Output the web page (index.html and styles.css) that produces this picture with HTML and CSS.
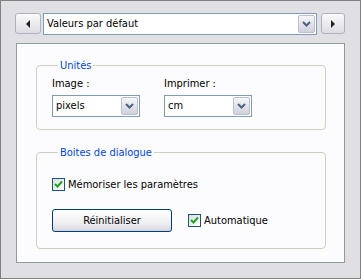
FILE: index.html
```html
<!DOCTYPE html>
<html lang="fr">
<head>
    <meta charset="UTF-8">
    <title>Préférences</title>
    <link rel="stylesheet" href="styles.css">
</head>
<body>
    <div class="window">
        <div class="nav">
            <button class="nav-btn"><span class="tri tri-left"></span></button>
            <div class="combo wide">
                <span class="combo-text">Valeurs par défaut</span>
                <span class="drop"><svg width="9" height="6" viewBox="0 0 9 6"><path d="M1 1 L4.5 4.5 L8 1" fill="none" stroke="#4d6185" stroke-width="2"/></svg></span>
            </div>
            <button class="nav-btn"><span class="tri tri-right"></span></button>
        </div>

        <div class="panel">
            <fieldset class="group units">
                <legend>Unités</legend>
                <div class="fields">
                    <div class="field">
                        <label>Image :</label>
                        <div class="combo small">
                            <span class="combo-text">pixels</span>
                            <span class="drop"><svg width="9" height="6" viewBox="0 0 9 6"><path d="M1 1 L4.5 4.5 L8 1" fill="none" stroke="#4d6185" stroke-width="2"/></svg></span>
                        </div>
                    </div>
                    <div class="field">
                        <label>Imprimer :</label>
                        <div class="combo small">
                            <span class="combo-text">cm</span>
                            <span class="drop"><svg width="9" height="6" viewBox="0 0 9 6"><path d="M1 1 L4.5 4.5 L8 1" fill="none" stroke="#4d6185" stroke-width="2"/></svg></span>
                        </div>
                    </div>
                </div>
            </fieldset>

            <fieldset class="group dialogs">
                <legend>Boites de dialogue</legend>
                <div class="check">
                    <span class="box"><svg width="9" height="9" viewBox="0 0 9 9"><path d="M1 4 L3.5 6.5 L8 1.5" fill="none" stroke="#21a121" stroke-width="2"/></svg></span>
                    <span>Mémoriser les paramètres</span>
                </div>
                <div class="row">
                    <button class="btn">Réinitialiser</button>
                    <div class="check">
                        <span class="box"><svg width="9" height="9" viewBox="0 0 9 9"><path d="M1 4 L3.5 6.5 L8 1.5" fill="none" stroke="#21a121" stroke-width="2"/></svg></span>
                        <span>Automatique</span>
                    </div>
                </div>
            </fieldset>
        </div>
    </div>
</body>
</html>
```

FILE: styles.css
```css
* {
    margin: 0;
    padding: 0;
    box-sizing: border-box;
}

body {
    font-family: 'DejaVu Sans Condensed', 'Liberation Sans', sans-serif;
    font-size: 11px;
    color: #000;
    background: #e0dfe3;
}

.window {
    width: 361px;
    height: 279px;
    border: 1px solid #808080;
    background: #e0dfe3;
    padding: 12px 15px 0 14px;
}

.nav {
    display: flex;
    align-items: center;
    height: 21px;
}

.nav-btn {
    width: 26px;
    height: 21px;
    border: 1px solid #b0b3bf;
    border-radius: 3px;
    background: linear-gradient(#fbfbfc, #dcdce4);
    display: flex;
    align-items: center;
    justify-content: center;
}

.nav-btn:last-child {
    width: 24px;
    margin-left: 4px;
}

.tri {
    width: 0;
    height: 0;
    border-top: 4px solid transparent;
    border-bottom: 4px solid transparent;
}

.tri-left { border-right: 4px solid #222; }
.tri-right { border-left: 4px solid #222; }

.combo {
    display: flex;
    align-items: stretch;
    height: 22px;
    border: 1px solid #7f9db9;
    background: #fff;
}

.combo.wide {
    flex: 1;
    margin-left: 2px;
}

.combo.small {
    width: 88px;
}

.combo-text {
    flex: 1;
    padding-left: 3px;
    line-height: 20px;
}

.drop {
    width: 17px;
    margin: 1px;
    border: 1px solid #b9bfce;
    border-radius: 2px;
    background: linear-gradient(#f6f6f9, #cfd1dc);
    display: flex;
    align-items: center;
    justify-content: center;
}

.panel {
    margin: 9px 0 0 1px;
    width: 329px;
    height: 220px;
    background: #fcfcfe;
    border: 1px solid #919b9c;
    padding: 14px 18px 0 19px;
}

.group {
    border: 1px solid #d0d0bf;
    border-radius: 4px;
    padding: 0 15px;
}

.group legend {
    color: #0046d5;
    padding: 0 2px;
    margin-left: 6px;
    line-height: 15px;
}

.units {
    height: 72px;
}

.fields {
    display: flex;
    gap: 24px;
    padding-top: 4px;
}

.field label {
    display: block;
    margin-bottom: 4px;
    line-height: 14px;
}

.dialogs {
    margin-top: 15px;
    height: 104px;
}

.check {
    display: flex;
    align-items: center;
    gap: 3px;
}

.dialogs > .check {
    margin-top: 18px;
}

.box {
    width: 13px;
    height: 13px;
    border: 1px solid #1c5180;
    background: linear-gradient(135deg, #dcdcd7, #fff);
    display: flex;
    align-items: center;
    justify-content: center;
}

.row {
    display: flex;
    align-items: center;
    gap: 16px;
    margin-top: 18px;
}

.btn {
    width: 120px;
    height: 23px;
    border: 1px solid #003c74;
    border-radius: 3px;
    background: linear-gradient(#fefefe, #f0f0f3 60%, #d6d6e0);
    font-family: inherit;
    font-size: 11px;
    color: #000;
}
```
